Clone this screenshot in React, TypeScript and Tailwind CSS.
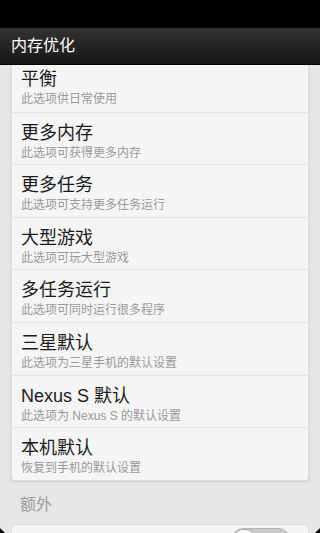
import React from "react";

type Option = {
  title: string;
  desc: string;
};

const options: Option[] = [
  { title: "平衡", desc: "此选项供日常使用" },
  { title: "更多内存", desc: "此选项可获得更多内存" },
  { title: "更多任务", desc: "此选项可支持更多任务运行" },
  { title: "大型游戏", desc: "此选项可玩大型游戏" },
  { title: "多任务运行", desc: "此选项可同时运行很多程序" },
  { title: "三星默认", desc: "此选项为三星手机的默认设置" },
  { title: "Nexus S 默认", desc: "此选项为 Nexus S 的默认设置" },
  { title: "本机默认", desc: "恢复到手机的默认设置" },
];

export default function App() {
  return (
    <div
      className="w-[320px] h-[533px] overflow-hidden flex flex-col bg-[#e7e7e7] relative"
      style={{ fontFamily: '"Liberation Sans", "Noto Sans CJK SC", sans-serif' }}
    >
      {/* ===== status bar ===== */}
      <div className="h-[28px] bg-black shrink-0" />

      {/* ===== title bar ===== */}
      <div className="h-[37px] shrink-0 flex items-center px-[11px] bg-gradient-to-b from-[#333333] to-[#171717] border-b border-black">
        <span className="text-white text-[16px] leading-none">内存优化</span>
      </div>

      {/* ===== content ===== */}
      <div className="flex-1 overflow-hidden px-[11px]">
        <div className="-mt-[7px] bg-[#f5f5f5] rounded-[4px] border border-[#dcdcdc] shadow-sm">
          {options.map((o, i) => (
            <div
              key={o.title}
              className={`h-[52.6px] flex flex-col pl-[9px] pt-[9px] ${
                i > 0 ? "border-t border-[#e3e3e3]" : ""
              }`}
            >
              <span className="text-[18px] leading-[22px] text-[#1b1b1b]">
                {o.title}
              </span>
              <span className="text-[12px] leading-[16px] mt-[1px] text-[#9a9a9a]">
                {o.desc}
              </span>
            </div>
          ))}
        </div>

        <div className="pl-[9px] pt-[14px] pb-[9px] text-[16px] leading-[20px] text-[#9b9b9b]">
          额外
        </div>

        <div className="h-[40px] bg-[#f5f5f5] rounded-[4px] border border-[#dcdcdc] flex justify-end pr-[18px] pt-[3px]">
          <div className="w-[58px] h-[22px] rounded-full bg-[#c9c9c9] border border-[#b5b5b5] relative">
            <div className="absolute left-0 top-0 w-[22px] h-[20px] rounded-full bg-white border border-[#aaaaaa]" />
          </div>
        </div>
      </div>

      {/* screen corners */}
      <div className="absolute left-0 bottom-0 w-0 h-0 border-l-[5px] border-l-black border-t-[5px] border-t-transparent" />
      <div className="absolute right-0 bottom-0 w-0 h-0 border-r-[5px] border-r-black border-t-[5px] border-t-transparent" />
    </div>
  );
}
